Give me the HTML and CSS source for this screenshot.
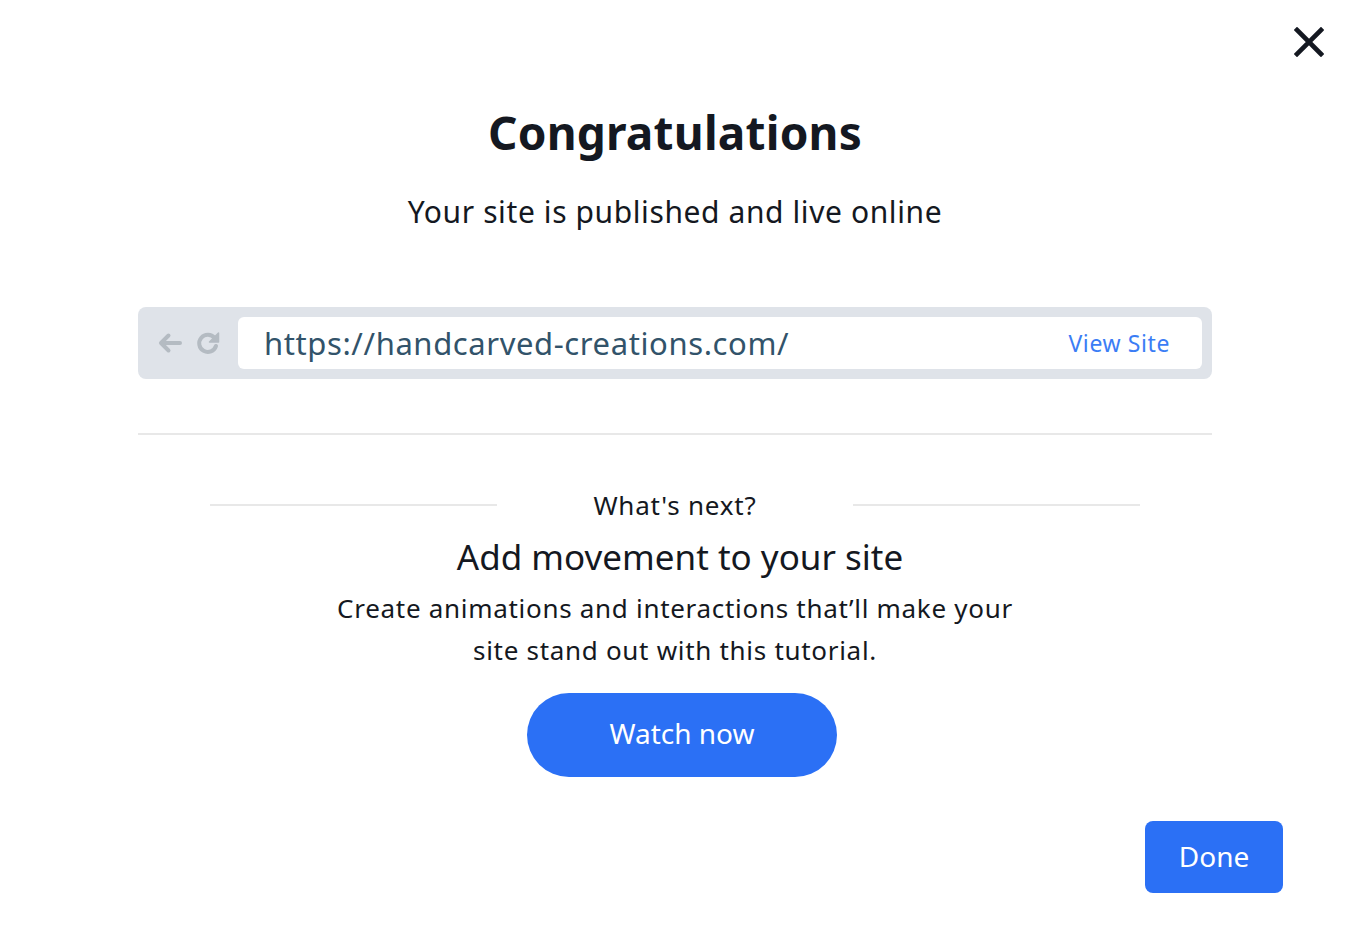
FILE: index.html
```html
<!DOCTYPE html>
<html lang="en">
<head>
<meta charset="UTF-8">
<meta name="viewport" content="width=device-width, initial-scale=1.0">
<title>Published</title>
<link rel="stylesheet" href="styles.css">
</head>
<body>

<div class="modal">
    <div class="topbar">
        <button class="close" aria-label="Close">
            <svg width="30" height="30" viewBox="0 0 30 30"><path d="M3 3L27 27M27 3L3 27" stroke="#141821" stroke-width="4.6" stroke-linecap="square"/></svg>
        </button>
    </div>

    <h1 class="title">Congratulations</h1>
    <p class="subtitle">Your site is published and live online</p>

    <div class="browser">
        <div class="nav-icons">
            <svg width="26" height="26" viewBox="0 0 26 26"><path d="M23 13H5M11.5 5.5L4 13L11.5 20.5" fill="none" stroke="#b4bbc2" stroke-width="4" stroke-linecap="round" stroke-linejoin="round"/></svg>
            <svg width="26" height="26" viewBox="0 0 26 26"><path d="M21 16A8.6 8.6 0 1 1 19.6 8" fill="none" stroke="#b4bbc2" stroke-width="4" stroke-linecap="round"/><path d="M23.5 3V12H14.5Z" fill="#b4bbc2" stroke="#b4bbc2" stroke-width="1.5" stroke-linejoin="round"/></svg>
        </div>
        <div class="address">
            <span class="url">https://handcarved-creations.com/</span>
            <a class="view-site" href="#">View Site</a>
        </div>
    </div>

    <hr class="divider">

    <div class="next">
        <div class="next-head">
            <span class="rule"></span>
            <span class="next-label">What's next?</span>
            <span class="rule"></span>
        </div>
        <h2 class="next-title">Add movement to your site</h2>
        <p class="next-text">Create animations and interactions that’ll make your<br>site stand out with this tutorial.</p>
        <button class="watch">Watch now</button>
    </div>

    <div class="footer">
        <button class="done">Done</button>
    </div>
</div>

</body>
</html>
```

FILE: styles.css
```css
body {
    margin: 0;
    padding: 0;
    background: #fff;
    font-family: "Noto Sans", "Open Sans", sans-serif;
    color: #141821;
}
.modal {
    width: 1350px;
    height: 936px;
    box-sizing: border-box;
    padding: 26px 138px 0;
}
.topbar {
    display: flex;
    justify-content: flex-end;
    margin-right: -113px;
    height: 32px;
}
.close {
    background: none;
    border: none;
    padding: 0;
    width: 32px;
    height: 32px;
    display: flex;
    align-items: center;
    justify-content: center;
    cursor: pointer;
}
.title {
    margin: 45px 0 0;
    text-align: center;
    font-size: 46px;
    line-height: 58px;
    font-weight: 700;
    letter-spacing: 0.2px;
}
.subtitle {
    margin: 31px 0 0;
    text-align: center;
    font-size: 30px;
    line-height: 40px;
    font-weight: 400;
    letter-spacing: 0.6px;
}
.browser {
    margin-top: 75px;
    height: 72px;
    background: #dfe3e9;
    border-radius: 8px;
    display: flex;
    align-items: center;
    padding: 10px 10px 10px 19px;
    box-sizing: border-box;
}
.nav-icons {
    display: flex;
    gap: 12px;
    width: 81px;
}
.address {
    flex: 1;
    height: 52px;
    background: #fff;
    border-radius: 6px;
    display: flex;
    align-items: center;
    justify-content: space-between;
    padding: 0 32px 0 26px;
}
.url {
    font-size: 31px;
    color: #32536a;
    letter-spacing: 0.6px;
}
.view-site {
    font-size: 23px;
    color: #3b7df5;
    text-decoration: none;
    letter-spacing: 0.6px;
}
.divider {
    margin: 54px 0 0;
    border: none;
    border-top: 2px solid #e8e8e8;
}
.next {
    display: flex;
    flex-direction: column;
    align-items: center;
    text-align: center;
}
.next-head {
    margin-top: 52px;
    width: 930px;
    display: flex;
    align-items: center;
    gap: 96px;
}
.rule {
    flex: 1;
    border-top: 2px solid #e8e8e8;
}
.next-label {
    font-size: 26px;
    line-height: 36px;
    letter-spacing: 0.8px;
}
.next-title {
    margin: 12px 0 0 10px;
    font-size: 35px;
    line-height: 44px;
    font-weight: 400;
}
.next-text {
    margin: 8px 0 0;
    font-size: 26px;
    line-height: 42px;
    letter-spacing: 0.7px;
}
.watch {
    margin: 22px 0 0 14px;
    width: 310px;
    height: 84px;
    padding: 0 0 5px;
    border: none;
    border-radius: 42px;
    background: #2b70f5;
    color: #fff;
    font-family: inherit;
    font-size: 28px;
    cursor: pointer;
}
.footer {
    display: flex;
    justify-content: flex-end;
    margin-right: -71px;
    margin-top: 44px;
}
.done {
    width: 138px;
    height: 72px;
    padding: 0 0 2px;
    border: none;
    border-radius: 8px;
    background: #2b70f5;
    color: #fff;
    font-family: inherit;
    font-size: 28px;
    cursor: pointer;
}
```
